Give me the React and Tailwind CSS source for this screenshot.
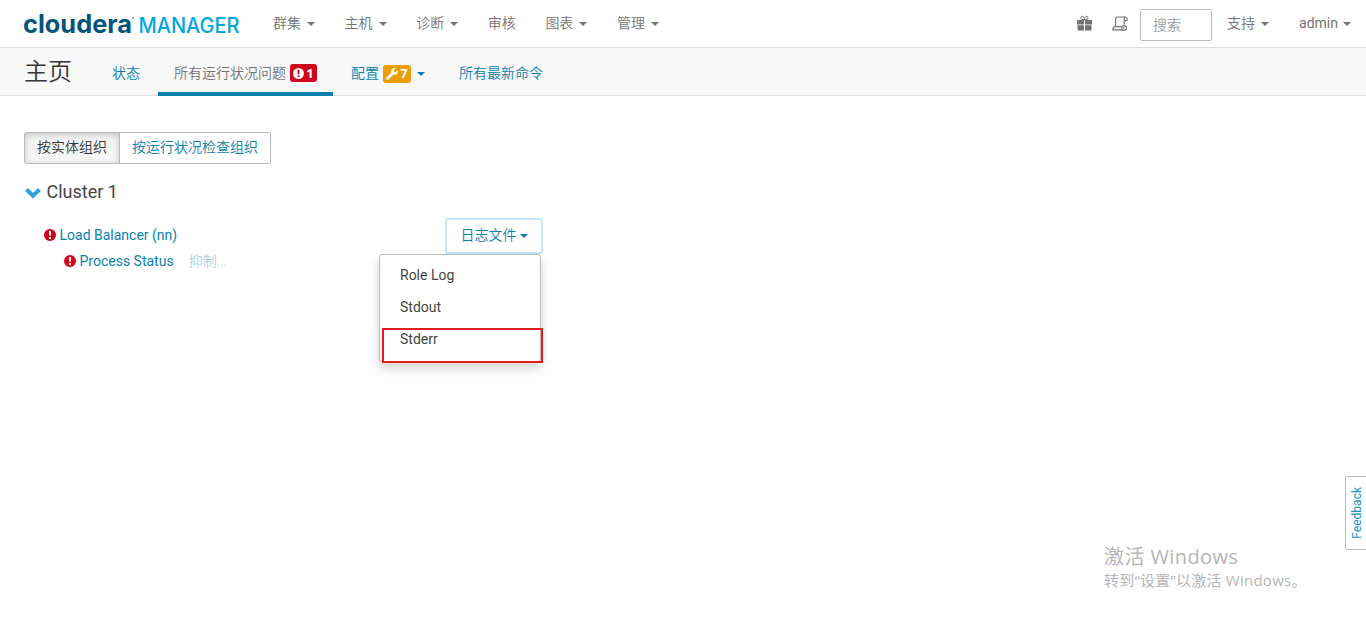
import { FaWrench } from "react-icons/fa"

const menus = [
    { label: "群集", caret: true },
    { label: "主机", caret: true },
    { label: "诊断", caret: true },
    { label: "审核", caret: false },
    { label: "图表", caret: true },
    { label: "管理", caret: true },
]

const logFiles = ["Role Log", "Stdout", "Stderr"]

function Caret({ className = "" }) {
    return (
        <span
            className={`inline-block h-0 w-0 border-x-4 border-t-4 border-x-transparent border-t-current ${className}`}
        />
    )
}

function Logo() {
    return (
        <svg width="228" height="44" viewBox="0 0 228 44" className="block shrink-0">
            <text
                x="3"
                y="30.5"
                textLength="109"
                lengthAdjust="spacingAndGlyphs"
                className="fill-[#00547c] font-['Inter'] text-[25px] font-bold"
            >
                cloudera
            </text>
            <circle cx="113" cy="16" r="0.8" fill="#00547c" />
            <text
                x="118.5"
                y="31"
                textLength="101"
                lengthAdjust="spacingAndGlyphs"
                className="fill-[#00a7e1] font-['Inter'] text-[21px] font-medium"
            >
                MANAGER
            </text>
        </svg>
    )
}

function AlertIcon({ size = 12, bang = "#fff", className = "" }) {
    return (
        <svg width={size} height={size} viewBox="0 0 12 12" className={`block shrink-0 ${className}`}>
            <circle cx="6" cy="6" r="6" fill="currentColor" />
            <path d="M4.900 1.900H7.100L6.850 6.800H5.150ZM5 7.900H7V9.900H5Z" fill={bang} />
        </svg>
    )
}

function GiftIcon() {
    return (
        <svg width="15" height="16" viewBox="0 0 15 16" className="-mt-[3px] block shrink-0">
            <path
                d="M7.5 4.800L4.300 4.200C3.700 2.600 4.200 1.100 5.200 1.100C6.400 1.100 7.200 2.800 7.500 4.800C7.800 2.800 8.600 1.100 9.800 1.100C10.800 1.100 11.300 2.600 10.700 4.200Z"
                fill="none"
                stroke="currentColor"
                strokeWidth="1"
            />
            <path d="M0.500 5H7v4.500H0V5.500zM8 5h6.500l0.500 0.500v4H8zM0.500 10.300H7V15.500H1L0.500 15zM8 10.300h6.500V15l-0.500 0.500H8z" fill="currentColor" />
        </svg>
    )
}

function CommandsIcon() {
    return (
        <svg
            width="16"
            height="16"
            viewBox="0 0 16 16"
            fill="none"
            stroke="currentColor"
            strokeWidth="1.2"
            className="block shrink-0"
        >
            <path d="M3.600 10.500V3.200C3.600 1.700 4.400 1 5.600 1H13.200C14.400 1 15 1.800 15 3V4.600H12.200" />
            <path d="M12.200 8.500V3C12.200 1.800 12.500 1 13.400 1" />
            <path d="M9 10.700H3.300C2 10.700 1 12 0.800 13.800H10" />
            <circle cx="12" cy="12" r="2.400" />
            <path d="M11.300 10.900L13 12L11.300 13.100Z" fill="currentColor" stroke="none" />
        </svg>
    )
}

function NavBar() {
    return (
        <nav className="flex h-12 items-center border-b border-[#ddd] bg-white pl-5 text-[#737373]">
            <Logo />
            <div className="-mt-[2px] ml-[25px] flex">
                {menus.map((menu) => (
                    <a key={menu.label} className="mr-[29.6px] flex items-center font-[350]">
                        {menu.label}
                        {menu.caret && <Caret className="ml-[6px] mt-[2px]" />}
                    </a>
                ))}
            </div>
            <div className="ml-auto flex items-center pt-[2px]">
                <GiftIcon />
                <span className="ml-5 -mt-[2px]">
                    <CommandsIcon />
                </span>
                <input
                    placeholder="搜索"
                    className="ml-3 h-8 w-[72px] rounded-[2px] border border-[#bbb] px-3 font-[350] placeholder:text-[#999]"
                />
                <a className="-mt-[3px] ml-[15px] flex items-center font-[350]">
                    支持 <Caret className="ml-[6px] mt-px" />
                </a>
                <a className="-mt-[3px] ml-[30px] mr-[15px] flex items-center">
                    admin <Caret className="ml-[5px] mt-px" />
                </a>
            </div>
        </nav>
    )
}

function TabBar() {
    return (
        <div className="flex h-12 border-b border-[#ddd] bg-[#f8f8f8] pl-6 text-[#0b7fad]">
            <h1 className="w-[72px] text-2xl leading-[49px] font-[350] text-[#333]">主页</h1>
            <a className="px-4 leading-[50px] font-[350]">状态</a>
            <a className="ml-[2px] flex h-12 w-[175px] items-center border-b-4 border-[#0b7fad] pl-4 pt-[5px] font-[350] text-[#737373]">
                所有运行状况问题
                <span className="ml-1 mt-px flex h-[18px] w-[27px] items-center justify-center gap-[2px] rounded-[3px] bg-[#d0021b] font-['Open_Sans'] text-[13px] font-bold text-white">
                    <AlertIcon size={11} bang="#d0021b" />1
                </span>
            </a>
            <a className="ml-[18px] flex items-center pt-[3px] font-[350]">
                配置
                <span className="ml-1 mt-px flex h-[18px] w-7 items-center justify-center gap-[2px] rounded-[3px] bg-[#e99f03] font-['Open_Sans'] text-[13px] font-bold text-white">
                    <FaWrench size={12} />7
                </span>
                <Caret className="ml-[6px] mt-px" />
            </a>
            <a className="ml-[34px] leading-[50px] font-[350]">所有最新命令</a>
        </div>
    )
}

function LogFilesMenu() {
    return (
        <div className="relative ml-auto w-[98px]">
            <button className="flex h-9 w-[98px] items-center justify-center rounded-[3px] border-2 border-[#c5e8f5] pb-[2px] font-[350] text-[#0b7fad]">
                日志文件 <Caret className="ml-[3px] mt-[2px]" />
            </button>
            <ul className="absolute right-[2px] top-9 h-[108px] w-[162px] rounded-[3px] border border-[#bbb] bg-white pt-1 text-[#444] shadow-[0_6px_12px_rgba(0,0,0,0.18)]">
                {logFiles.map((name) => (
                    <li key={name} className="h-8 pl-5 leading-8">
                        {name}
                    </li>
                ))}
                <li className="absolute left-[2px] top-[73px] h-[35px] w-[161px] border-2 border-[#e51c1c]" />
            </ul>
        </div>
    )
}

export default function App() {
    return (
        <div className="relative h-[625px] w-[1366px] overflow-hidden bg-white font-['Roboto','Noto_Sans_CJK_SC',sans-serif] text-sm">
            <NavBar />
            <TabBar />
            <main className="px-6 pt-9">
                <div className="flex h-8 w-[247px] rounded-[2px] border border-[#bbb] leading-[28px]">
                    <button className="w-[95px] border-r border-[#bbb] bg-[#f5f5f5] pb-[2px] font-[350] text-[#333] shadow-[inset_0_2px_6px_rgba(0,0,0,0.2)]">
                        按实体组织
                    </button>
                    <button className="flex-1 pb-[2px] font-[350] text-[#0b7fad]">按运行状况检查组织</button>
                </div>
                <h2 className="mt-4 flex h-6 items-center text-lg text-[#444]">
                    <svg width="18" height="12" viewBox="0 0 18 12" className="mr-[4.5px] mt-px">
                        <path d="M2.500 2.500L9 8.700L15.500 2.500" fill="none" stroke="#2ba4de" strokeWidth="4" />
                    </svg>
                    Cluster 1
                </h2>
                <div className="mt-[14px] flex h-9 w-[519px] items-center pl-5">
                    <AlertIcon className="-mt-[2px] text-[#d0021b]" />
                    <a className="-mt-[3px] ml-[3.5px] text-[#0b7fad]">Load Balancer (nn)</a>
                    <LogFilesMenu />
                </div>
                <div className="-mt-[3px] flex h-5 items-center pl-10">
                    <AlertIcon className="text-[#d0021b]" />
                    <a className="ml-[3.5px] text-[#0b7fad]">Process Status</a>
                    <a className="ml-[15px] font-[350] text-[#a9d2e2]">抑制...</a>
                </div>
            </main>
            <a className="absolute left-[1345px] top-[476px] flex h-[74px] w-[22px] items-center justify-center rounded-l-[2px] border border-[#bbb] pl-px text-xs text-[#1a8fc0]">
                <span className="rotate-180 [writing-mode:vertical-rl]">Feedback</span>
            </a>
            <div className="absolute left-[1104px] top-[543px] whitespace-nowrap font-['Open_Sans','Noto_Sans_CJK_SC',sans-serif] text-[#b5b5b5]">
                <p className="text-xl leading-7 tracking-[0.4px]">激活 Windows</p>
                <p className="-mt-px text-[15px] leading-5 tracking-[0.25px]">转到“设置”以激活 Windows。</p>
            </div>
        </div>
    )
}
